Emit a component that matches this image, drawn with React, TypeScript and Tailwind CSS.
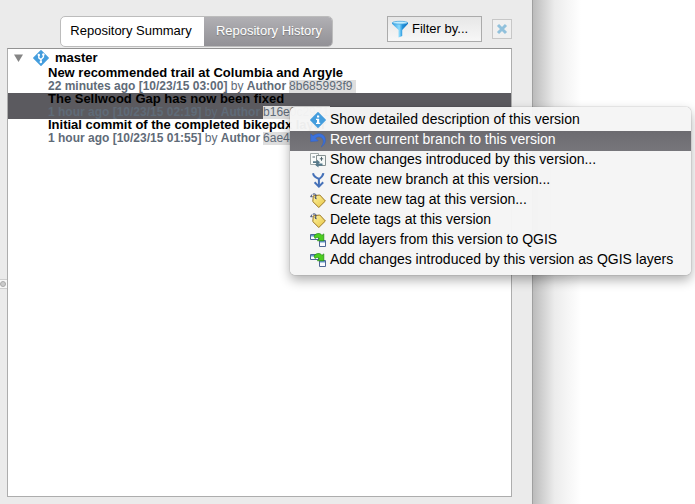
import React from "react";

function BranchDiamond() {
  return (
    <svg width="16" height="16" viewBox="0 0 16 16" className="block shrink-0">
      <path d="M8 .8L15.2 8 8 15.2.8 8z" fill="#449ddd" stroke="#449ddd" strokeWidth="1.4" strokeLinejoin="round" />
      <path d="M5.8 5v2.8L8 9.6v2.9M10.4 4v3L8 9.6" fill="none" stroke="#fff" strokeWidth="1.4" />
      <circle cx="5.8" cy="5" r="1.2" fill="#fff" />
      <circle cx="10.4" cy="4.4" r="1.2" fill="#fff" />
      <circle cx="7.8" cy="12" r="1.2" fill="#fff" />
    </svg>
  );
}

function InfoIcon() {
  return (
    <svg width="16" height="16" viewBox="0 0 16 16" className="block">
      <path d="M8 .8L15.2 8 8 15.2.8 8z" fill="#449ddd" stroke="#449ddd" strokeWidth="1.4" strokeLinejoin="round" />
      <path d="M7 3.5h2.2v2H7zM6 6.7h3.2v4h1V12H6v-1.3h1V8H6z" fill="#fff" />
    </svg>
  );
}

function UndoIcon() {
  return (
    <svg width="16" height="16" viewBox="0 0 16 16" className="block">
      <path d="M.7 1.8l2.3 2C6.8.8 12.2.9 14.5 4.6c2 3.5.7 8-3.3 10.4 2.1-2.8 2.9-5.6 1.5-8C11.1 4.3 7.9 4.2 5.6 6.2L8.2 8.9.7 9.6z" fill="#3c72dc" stroke="#2c5fc6" strokeWidth=".5" />
    </svg>
  );
}

function CompareIcon() {
  return (
    <svg width="16" height="16" viewBox="0 0 16 16" className="block">
      <path d="M.5 1.5h8v11h-8z" fill="#fafcfb" stroke="#a2aaaa" />
      <path d="M6.5 3.5h9v10h-9z" fill="#f5f8f7" stroke="#869192" />
      <path d="M11.5 4.8v4M9.8 6.8h3.4M2.5 5H5" stroke="#53656e" strokeWidth="1" />
      <path d="M3 9.2h4V7.7l3 2.5-3 2.5v-1.6H3z" fill="#587a8b" />
      <path d="M12.5 11.5H8.5V10L5 12.8l3.5 2.8v-1.9h4z" fill="#55798b" />
    </svg>
  );
}

function MergeIcon() {
  return (
    <svg width="16" height="16" viewBox="0 0 16 16" className="block">
      <path d="M3 1.2c.5 2.5 2 4.1 5.8 5.6M13.4 1.2c-.3 2.5-1.8 4.1-4.5 6V14" fill="none" stroke="#4571b8" strokeWidth="2" />
      <path d="M4.6 10.2l4.3 4.4 4.3-4.4" fill="none" stroke="#4571b8" strokeWidth="2" />
    </svg>
  );
}

function TagIcon() {
  return (
    <svg width="16" height="16" viewBox="0 0 16 16" className="block">
      <defs>
        <linearGradient id="tagGold" x1="0" y1="0" x2="1" y2="1">
          <stop stopColor="#fff4a0" /><stop offset="1" stopColor="#e6c443" />
        </linearGradient>
      </defs>
      <path d="M3.3 3.8L9.8 3l5.6 6-6.6 6.5L2.8 9.6z" fill="url(#tagGold)" stroke="#9c7825" />
      <path d="M.5 4.2l1.8-1.7M.5 4.7h2M3 2h2.3c1 .3.5 3 .2 4.7M4.6 5.3l2 1.5" fill="none" stroke="#35446f" />
    </svg>
  );
}

function AddLayerIcon() {
  return (
    <svg width="16" height="16" viewBox="0 0 16 16" className="block">
      <path d="M.5 2.5h8v5h-8zM9.5 8.5h6v6h-6z" fill="#fafcff" stroke="#4f6794" />
      <path d="M1 3h7v1.5H1zM10 9h5v1.5h-5z" fill="#6795d0" />
      <path d="M4 4C6 .9 10.2.7 12 3.3l1.8-1.4v6.9H7.4l1.8-2C8.3 5 6.3 5.2 5 6.5z" fill="#4dcc22" stroke="#238a13" strokeWidth=".7" />
    </svg>
  );
}

function FunnelIcon() {
  return (
    <svg width="18" height="18" viewBox="0 0 18 18" className="block shrink-0">
      <defs>
        <linearGradient id="funnel" x1="0" x2="1">
          <stop stopColor="#2e99df" /><stop offset=".45" stopColor="#8cdcff" /><stop offset=".65" stopColor="#2494dc" /><stop offset="1" stopColor="#0868bb" />
        </linearGradient>
      </defs>
      <path d="M1 2.5h16v1.2L11.2 10v6L7.6 17.5V10L1 3.7z" fill="url(#funnel)" />
      <ellipse cx="9" cy="2.7" rx="7.5" ry="1.4" fill="#c4eeff" stroke="#4aa8df" strokeWidth=".8" />
    </svg>
  );
}

const commits = [
  { title: "New recommended trail at Columbia and Argyle", when: "22 minutes ago [10/23/15 03:00]", hash: "8b685993f9", selected: false },
  { title: "The Sellwood Gap has now been fixed", when: "1 hour ago [10/23/15 02:19]", hash: "b16e0c2971", selected: true },
  { title: "Initial commit of the completed bikepdx layer", when: "1 hour ago [10/23/15 01:55]", hash: "6ae43c7d02", selected: false },
];

const actions = [
  { label: "Show detailed description of this version", icon: <InfoIcon /> },
  { label: "Revert current branch to this version", icon: <UndoIcon />, active: true },
  { label: "Show changes introduced by this version...", icon: <CompareIcon /> },
  { label: "Create new branch at this version...", icon: <MergeIcon /> },
  { label: "Create new tag at this version...", icon: <TagIcon /> },
  { label: "Delete tags at this version", icon: <TagIcon /> },
  { label: "Add layers from this version to QGIS", icon: <AddLayerIcon /> },
  { label: "Add changes introduced by this version as QGIS layers", icon: <AddLayerIcon /> },
];

export default function App() {
  return (
    <div className="relative flex h-[504px] w-[695px] overflow-hidden bg-white font-['Liberation_Sans',Arial,sans-serif] text-black">
      <div className="flex h-full w-[533px] shrink-0 border-r border-[#a0a0a0] bg-[#ebebeb]">
        <div className="flex w-[7px] shrink-0 flex-col pt-[279px]">
          <div className="flex h-[10px] items-center border-y border-[#cfcfcf] bg-[#f8f8f8]">
            <span className="size-[6px] rounded-full border border-[#aaa] bg-[#ccc]" />
          </div>
        </div>
        <div className="flex w-[505px] flex-col pt-4">
          <div className="flex h-8 items-start">
            <div className="ml-[53px] flex h-[31px] w-[273px] overflow-hidden rounded-[5px] border border-[#bcbcbc] bg-white text-[13px]">
              <div className="flex w-[143px] items-center justify-center whitespace-nowrap pb-px pr-[3px]">Repository Summary</div>
              <div className="flex flex-1 items-center justify-center whitespace-nowrap bg-linear-to-b from-[#b1b0b4] to-[#929196] pb-px pl-[2px] text-white [text-shadow:0_1px_1px_#777]">Repository History</div>
            </div>
            <div className="ml-[54px] flex h-[26px] w-[95px] items-center border border-[#ababab] bg-linear-to-b from-[#e7e7e7] to-[#f7f7f7] pl-[3px] text-[13px]">
              <FunnelIcon />
              <span className="ml-[3px] whitespace-nowrap pb-px">Filter by...</span>
            </div>
            <div className="ml-[10px] mt-[3px] flex size-5 items-center justify-center border border-[#c7c7c7] bg-[#f0f0f0]">
              <svg width="12" height="12" viewBox="0 0 12 12"><path d="M2 2l8 8M10 2l-8 8" stroke="#91c1dc" strokeWidth="3" /></svg>
            </div>
          </div>
          <div className="h-[449px] border border-[#adadad] border-t-[#929292] bg-white">
            <div className="flex h-[18px] items-center pl-[6px] text-[13px] font-bold">
              <svg width="9" height="8" viewBox="0 0 9 8"><path d="M0 .5h9L4.5 8z" fill="#858585" /></svg>
              <span className="ml-[10px]"><BranchDiamond /></span>
              <span className="ml-[6px]">master</span>
            </div>
            {commits.map((c) => (
              <div key={c.hash} className={`h-[26px] pl-10 ${c.selected ? "bg-[#5b5a5f]" : ""}`}>
                <div className="h-[13px] whitespace-nowrap text-[13px] font-bold leading-[12px]">{c.title}</div>
                <div className="flex h-[13px] whitespace-nowrap text-[12px] leading-[13px] text-[#5f6b78]">
                  <b>{c.when}</b>&nbsp;by&nbsp;<b>Author</b>
                  <span className="ml-[3px] h-[13px] w-[67px] bg-[#dedede]">{c.hash}</span>
                </div>
              </div>
            ))}
          </div>
        </div>
      </div>
      <div className="w-12 bg-linear-to-r from-[#bcbcbc] via-[#ececec] via-45% to-white" />
      <div className="absolute left-[290px] top-[107px] h-[168px] w-[401px] rounded-[5px] bg-[#f5f5f5]/97 py-1 shadow-[0_5px_12px_rgba(0,0,0,0.32),0_0_1px_rgba(0,0,0,0.6)]">
        {actions.map((a) => (
          <div key={a.label} className={`flex h-5 items-start pl-5 ${a.active ? "bg-linear-to-b from-[#6c6b70] to-[#77767b] text-white" : ""}`}>
            <span className="pt-px">{a.icon}</span>
            <span className="ml-1 whitespace-nowrap text-[14px] leading-[16px]">{a.label}</span>
          </div>
        ))}
      </div>
    </div>
  );
}
